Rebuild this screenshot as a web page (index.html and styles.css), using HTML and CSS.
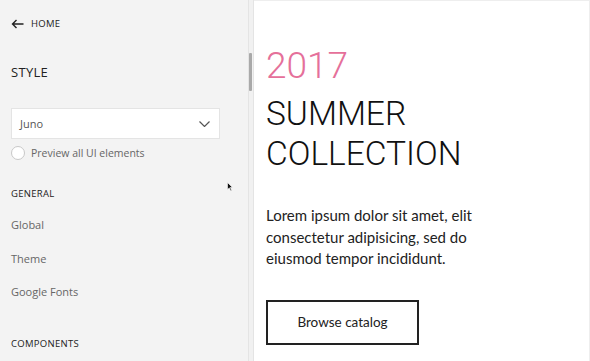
FILE: index.html
```html
<!DOCTYPE html>
<html lang="en">
<head>
  <meta charset="UTF-8">
  <meta name="viewport" content="width=device-width, initial-scale=1.0">
  <title>Style editor</title>
  <link rel="stylesheet" href="styles.css">
</head>
<body>

  <div class="app">
    <aside class="sidebar">
      <a class="back" href="#">
        <svg width="13" height="10" viewBox="0 0 13 10"><path d="M12.5 5H1.5M5.5 1L1.5 5l4 4" fill="none" stroke="#222" stroke-width="1.4"/></svg>
        <span>HOME</span>
      </a>

      <h2 class="title">STYLE</h2>

      <div class="select">
        <span>Juno</span>
        <svg width="11" height="6" viewBox="0 0 11 6"><path d="M0.5 0.5l5 5 5-5" fill="none" stroke="#555" stroke-width="1.2"/></svg>
      </div>

      <label class="check"><span class="radio"></span> Preview all UI elements</label>

      <h3 class="group">GENERAL</h3>
      <ul class="links">
        <li>Global</li>
        <li>Theme</li>
        <li>Google Fonts</li>
      </ul>

      <h3 class="group comp">COMPONENTS</h3>

      <svg class="cursor" width="6" height="9" viewBox="0 0 6 9"><path d="M0.5 0.5v7l1.8-1.6 1.3 2.8 1-0.5-1.3-2.7H5.5z" fill="#111" stroke="#fff" stroke-width="0.6"/></svg>
    </aside>

    <div class="track"><div class="thumb"></div></div>

    <main class="preview">
      <div class="year">2017</div>
      <h1 class="headline">SUMMER<br>COLLECTION</h1>
      <p class="lead">Lorem ipsum dolor sit amet, elit consectetur adipisicing, sed do eiusmod tempor incididunt.</p>
      <button class="browse">Browse catalog</button>
    </main>
  </div>

</body>
</html>
```

FILE: styles.css
```css
body {
  margin: 0;
  padding: 0;
  background-color: #fff;
  color: #333;
  font-family: 'Open Sans', sans-serif;
}

.app {
  display: flex;
  width: 590px;
  height: 361px;
  overflow: hidden;
}

.sidebar {
  position: relative;
  width: 248px;
  flex-shrink: 0;
  background-color: #f3f3f3;
  padding: 0 0 0 11px;
  box-sizing: border-box;
}

.back {
  display: flex;
  align-items: center;
  gap: 7px;
  margin-top: 17px;
  color: #222;
  text-decoration: none;
  font-size: 9.5px;
  letter-spacing: 0.3px;
}

.title {
  margin: 33px 0 0;
  font-size: 13px;
  font-weight: 400;
  color: #222;
  letter-spacing: 0.3px;
}

.select {
  display: flex;
  align-items: center;
  justify-content: space-between;
  width: 209px;
  height: 31px;
  margin-top: 27px;
  padding: 0 9px 0 8px;
  box-sizing: border-box;
  background-color: #fff;
  border: 1px solid #e4e4e4;
  font-size: 11px;
  color: #555;
}

.check {
  display: flex;
  align-items: center;
  gap: 6px;
  margin-top: 7px;
  font-size: 10.5px;
  color: #666;
}

.radio {
  width: 12px;
  height: 12px;
  border: 1px solid #c8c8c8;
  border-radius: 50%;
  background-color: #fff;
}

.group {
  margin: 27px 0 0;
  font-size: 9.5px;
  font-weight: 400;
  color: #222;
  letter-spacing: 0.3px;
}

.links {
  list-style: none;
  margin: 17px 0 0;
  padding: 0;
}

.links li {
  height: 33.5px;
  font-size: 11px;
  color: #666;
}

.comp {
  margin-top: 19px;
}

.cursor {
  position: absolute;
  left: 227px;
  top: 182px;
}

.track {
  width: 4px;
  flex-shrink: 0;
  background-color: #f1f1f1;
  border-left: 1px solid #e4e4e4;
  border-right: 1px solid #e4e4e4;
}

.thumb {
  width: 3px;
  height: 38px;
  margin-top: 53px;
  background-color: #a9a9a9;
  border-radius: 1px;
}

.preview {
  flex: 1;
  padding: 0 0 0 12px;
  border-top: 1px solid #eee;
  border-right: 1px solid #eee;
  font-family: 'Lato', sans-serif;
  color: #1a1a1a;
}

.year {
  margin-top: 42px;
  font-family: 'Roboto', sans-serif;
  font-size: 37px;
  font-weight: 300;
  line-height: 46px;
  color: #e5709a;
}

.headline {
  margin: 5px 0 0;
  font-family: 'Roboto', sans-serif;
  font-size: 33.5px;
  font-weight: 300;
  line-height: 40px;
  color: #111;
}

.lead {
  width: 225px;
  margin: 31px 0 0;
  font-size: 15px;
  line-height: 21.5px;
  color: #222;
}

.browse {
  width: 153px;
  height: 45px;
  margin-top: 30px;
  background-color: #fff;
  border: 2px solid #222;
  font-family: 'Lato', sans-serif;
  font-size: 13.5px;
  color: #222;
  cursor: pointer;
}
```
